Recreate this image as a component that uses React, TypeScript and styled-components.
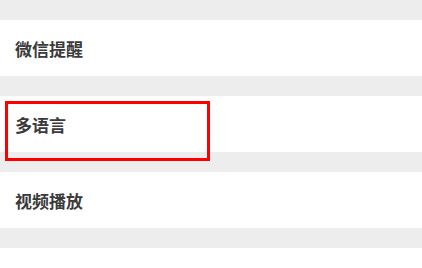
import React from "react";
import styled, { createGlobalStyle } from "styled-components";

const GlobalStyle = createGlobalStyle`
  html, body {
    margin: 0;
    padding: 0;
    background: #ededed;
  }
  body {
    font-family: "Noto Sans CJK SC", "Noto Sans", sans-serif;
  }
`;

const Page = styled.div`
  width: 422px;
  height: 268px;
  overflow: hidden;
  background: #ededed;
  display: flex;
  flex-direction: column;
  gap: 20px;
  padding-top: 20px;
  box-sizing: border-box;
`;

const Row = styled.div`
  position: relative;
  height: 56px;
  flex-shrink: 0;
  background: #ffffff;
  display: flex;
  align-items: center;
  padding-left: 15px;
`;

const Label = styled.span`
  font-size: 17px;
  font-weight: 700;
  color: #3a3a3a;
  line-height: 1;
`;

const Highlight = styled.div`
  position: absolute;
  left: 5px;
  top: 5px;
  width: 205px;
  height: 60px;
  border: 3px solid #ff0000;
  box-sizing: border-box;
  pointer-events: none;
  z-index: 1;
`;

const items = [
  { label: "微信提醒", active: false },
  { label: "多语言", active: true },
  { label: "视频播放", active: false },
  { label: "", active: false }
];

const App: React.FC = () => {
  return (
    <>
      <GlobalStyle />
      <Page>
        {items.map((item, index) => (
          <Row key={index}>
            <Label>{item.label}</Label>
            {item.active && <Highlight />}
          </Row>
        ))}
      </Page>
    </>
  );
};

export default App;
